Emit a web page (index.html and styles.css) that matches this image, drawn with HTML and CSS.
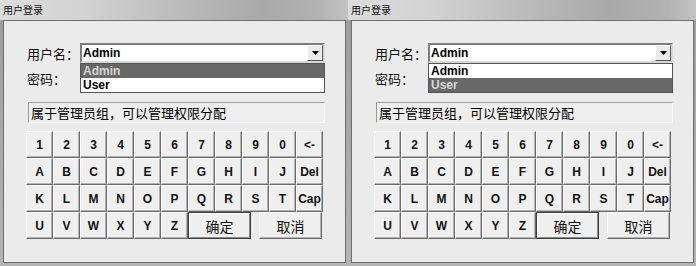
FILE: index.html
```html
<!DOCTYPE html>
<html lang="zh-CN">
<head>
  <meta charset="UTF-8" />
  <title>用户登录</title>
  <link rel="stylesheet" href="styles.css">
</head>
<body>
  <div class="desktop">
    <div class="window">
      <div class="titlebar">用户登录</div>
      <div class="client">
        <div class="field">
          <label>用户名：</label>
          <div class="combo">
            <span class="combo-value">Admin</span>
            <span class="combo-btn"><svg width="7" height="4" viewBox="0 0 7 4"><path d="M0 0h7L3.5 4z" fill="#000"/></svg></span>
            <ul class="combo-list">
              <li class="selected">Admin</li>
              <li>User</li>
            </ul>
          </div>
        </div>
        <div class="field pwd-row">
          <label>密码：</label>
          <input type="password" class="pwd">
        </div>
        <div class="info">属于管理员组，可以管理权限分配</div>
        <div class="keyboard"></div>
      </div>
    </div>

    <div class="window">
      <div class="titlebar">用户登录</div>
      <div class="client">
        <div class="field">
          <label>用户名：</label>
          <div class="combo">
            <span class="combo-value">Admin</span>
            <span class="combo-btn"><svg width="7" height="4" viewBox="0 0 7 4"><path d="M0 0h7L3.5 4z" fill="#000"/></svg></span>
            <ul class="combo-list">
              <li>Admin</li>
              <li class="selected">User</li>
            </ul>
          </div>
        </div>
        <div class="field pwd-row">
          <label>密码：</label>
          <input type="password" class="pwd">
        </div>
        <div class="info">属于管理员组，可以管理权限分配</div>
        <div class="keyboard"></div>
      </div>
    </div>
  </div>

  <script>
    const rows = [
      ["1", "2", "3", "4", "5", "6", "7", "8", "9", "0", "<-"],
      ["A", "B", "C", "D", "E", "F", "G", "H", "I", "J", "Del"],
      ["K", "L", "M", "N", "O", "P", "Q", "R", "S", "T", "Cap"],
      ["U", "V", "W", "X", "Y", "Z"]
    ];

    document.querySelectorAll(".keyboard").forEach((kb) => {
      rows.forEach((keys, i) => {
        const row = document.createElement("div");
        row.className = "key-row";
        keys.forEach((k) => {
          const b = document.createElement("button");
          b.className = "key";
          b.textContent = k;
          row.appendChild(b);
        });
        if (i === rows.length - 1) {
          row.innerHTML += '<button class="wide default">确定</button><button class="wide">取消</button>';
        }
        kb.appendChild(row);
      });
    });
  </script>
</body>
</html>
```

FILE: styles.css
```css
body {
  margin: 0;
  background: #a4a4a4;
  font-family: "Noto Sans CJK SC", sans-serif;
}
.desktop {
  display: flex;
  width: 696px;
  height: 266px;
  overflow: hidden;
}
.window {
  width: 348px;
  height: 266px;
  display: flex;
  flex-direction: column;
  background: linear-gradient(to bottom, #9c9c9c, #b4b4b4);
}
.titlebar {
  height: 20px;
  line-height: 20px;
  padding-left: 3px;
  font-size: 10px;
  color: #111;
  background: linear-gradient(to right, #dcdcdc 0%, #d2d2d2 25%, #bcbcbc 50%, #a9a9a9 75%, #b2b2b2 92%, #c4c4c4 100%);
}
.client {
  flex: 1;
  margin: 0 2px 3px 3px;
  border: 1px solid #6e6e6e;
  background: #ebebeb;
  padding: 22px 0 0 23px;
}
.field {
  display: flex;
  align-items: center;
  height: 20px;
}
.field label {
  width: 53px;
  font-size: 13px;
  color: #111;
}
.pwd-row {
  margin-top: 5px;
}
.pwd {
  width: 245px;
  height: 20px;
  box-sizing: border-box;
  border: 1px solid #888;
}
.combo {
  position: relative;
  width: 245px;
  height: 20px;
  box-sizing: border-box;
  border: 2px solid;
  border-color: #7c7c7c #d8d8d8 #d8d8d8 #7c7c7c;
  background: #fff;
  font-family: "Liberation Sans", Arial, sans-serif;
  font-weight: bold;
  font-size: 12px;
}
.combo-value {
  display: block;
  padding-left: 1px;
  line-height: 16px;
}
.combo-btn {
  position: absolute;
  right: 0;
  top: 0;
  width: 16px;
  height: 16px;
  box-sizing: border-box;
  border: 1px solid;
  border-color: #fff #555 #555 #fff;
  background: #ececec;
  display: flex;
  align-items: center;
  justify-content: center;
}
.combo-list {
  position: absolute;
  top: 18px;
  left: -2px;
  right: -2px;
  margin: 0;
  padding: 0;
  list-style: none;
  border: 1px solid #555;
  background: #fff;
  z-index: 2;
}
.combo-list li {
  height: 14px;
  line-height: 14px;
  padding-left: 2px;
  color: #000;
}
.combo-list li.selected {
  background: #686868;
  color: #d6d6d6;
}
.info {
  margin: 14px 0 0 1px;
  width: 297px;
  height: 21px;
  box-sizing: border-box;
  border: 1px solid;
  border-color: #9a9a9a #fafafa #fafafa #9a9a9a;
  background: #eeeeee;
  padding-left: 2px;
  font-size: 13px;
  line-height: 19px;
  color: #000;
}
.keyboard {
  margin: 8px 0 0 -1px;
  width: 297px;
}
.key-row {
  display: flex;
  gap: 0;
}
.key, .wide {
  flex-shrink: 0;
  height: 27px;
  box-sizing: border-box;
  padding: 0;
  border: 1px solid;
  border-color: #fff #6a6a6a #6a6a6a #fff;
  box-shadow: inset -1px -1px #b4b4b4;
  background: #efefef;
  color: #111;
}
.key {
  width: 27px;
  font-family: "Liberation Sans", Arial, sans-serif;
  font-weight: bold;
  font-size: 12px;
}
.wide {
  width: 63px;
  font-family: "Noto Sans CJK SC", sans-serif;
  font-size: 14px;
}
.wide.default {
  margin-right: 8px;
  border-color: #3c3c3c;
  box-shadow: inset 1px 1px #fff, inset -1px -1px #8a8a8a;
}
```
